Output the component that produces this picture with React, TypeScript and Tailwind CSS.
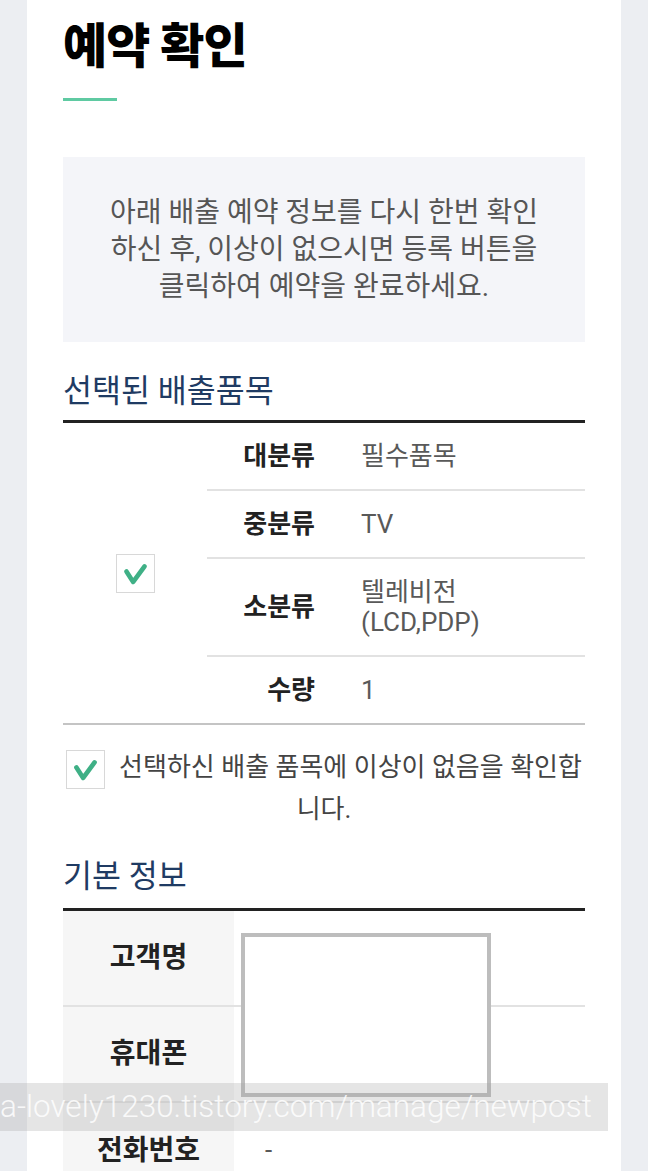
import React from 'react';

const items = [
  { label: '대분류', value: ['필수품목'] },
  { label: '중분류', value: ['TV'] },
  { label: '소분류', value: ['텔레비전', '(LCD,PDP)'] },
  { label: '수량', value: ['1'] },
];

const basic = [
  { label: '고객명', value: '' },
  { label: '휴대폰', value: '' },
  { label: '전화번호', value: '-' },
];

const CheckBox = () => (
  <span className="inline-flex h-[39px] w-[39px] shrink-0 items-center justify-center border border-[#d8d8d8] bg-white align-middle">
    <svg viewBox="0 0 24 24" className="h-[31px] w-[31px]">
      <path
        d="M5 10.5 L10.2 18.5 L19 6.5"
        fill="none"
        stroke="#3fb086"
        strokeWidth="3.6"
        strokeLinecap="round"
        strokeLinejoin="round"
      />
    </svg>
  </span>
);

export default function App() {
  return (
    <div className="relative min-h-screen overflow-hidden bg-[#eceef2] font-['Roboto','Noto_Sans_CJK_KR',sans-serif]">
      <div className="mx-[27px] min-h-screen bg-white px-[36px] pt-[19px] pb-[40px]">
        {/* page title */}
        <h1 className="text-[48px] font-black leading-[56px] tracking-[-1px] text-black">예약 확인</h1>
        <div className="mt-[23px] h-[3px] w-[54px] bg-[#5fcaa2]" />

        <div className="mt-[56px] bg-[#f4f5f9] py-[37px] text-center text-[28px] leading-[37px] text-[#565656]">
          아래 배출 예약 정보를 다시 한번 확인
          <br />
          하신 후, 이상이 없으시면 등록 버튼을
          <br />
          클릭하여 예약을 완료하세요.
        </div>

        {/* selected items */}
        <h2 className="mt-[30px] mb-[8px] text-[31.5px] leading-[40px] text-[#1f3b63]">선택된 배출품목</h2>
        <div className="flex border-t-[3px] border-b-2 border-t-[#222] border-b-[#c4c4c4]">
          <div className="flex w-[144px] items-center justify-center">
            <CheckBox />
          </div>
          <div className="flex-1 divide-y-2 divide-[#e2e2e2]">
            {items.map((it) => (
              <div key={it.label} className="flex items-center py-[18px] text-[26px] leading-[30px]">
                <div className="w-[108px] text-right font-bold text-[#222]">{it.label}</div>
                <div className="pl-[46px] text-[#595959]">
                  {it.value.map((v) => (
                    <div key={v}>{v}</div>
                  ))}
                </div>
              </div>
            ))}
          </div>
        </div>

        <p className="mt-[22px] text-center text-[26px] leading-[40px] text-[#444]">
          <span className="mr-[14px] inline-flex align-middle">
            <CheckBox />
          </span>
          선택하신 배출 품목에 이상이 없음을 확인합
          <br />
          니다.
        </p>

        {/* basic info */}
        <h2 className="mt-[28px] mb-[11px] text-[31.5px] leading-[40px] text-[#1f3b63]">기본 정보</h2>
        <div className="relative border-t-[3px] border-t-[#222]">
          {basic.map((row, i) => (
            <div
              key={row.label}
              className={`flex h-[96px] ${i < basic.length - 1 ? 'border-b-2 border-[#e2e2e2]' : ''}`}
            >
              <div className="flex w-[171px] items-center justify-center bg-[#f6f6f6] text-[28px] font-bold text-[#222]">
                {row.label}
              </div>
              <div className="flex items-center pl-[31px] text-[26px] text-[#595959]">{row.value}</div>
            </div>
          ))}
          <div className="absolute top-[22px] left-[178px] h-[164px] w-[250px] border-[4px] border-[#bdbdbd] bg-white" />
        </div>
      </div>

      {/* address bar overlay */}
      <div className="absolute top-[1083px] left-0 h-[48px] w-[608px] overflow-hidden whitespace-nowrap bg-[rgba(160,160,160,0.28)] font-['Roboto',sans-serif] text-[31.5px] font-light leading-[48px] text-[rgba(255,255,255,0.85)]">
        a-lovely1230.tistory.com/manage/newpost
      </div>
    </div>
  );
}
